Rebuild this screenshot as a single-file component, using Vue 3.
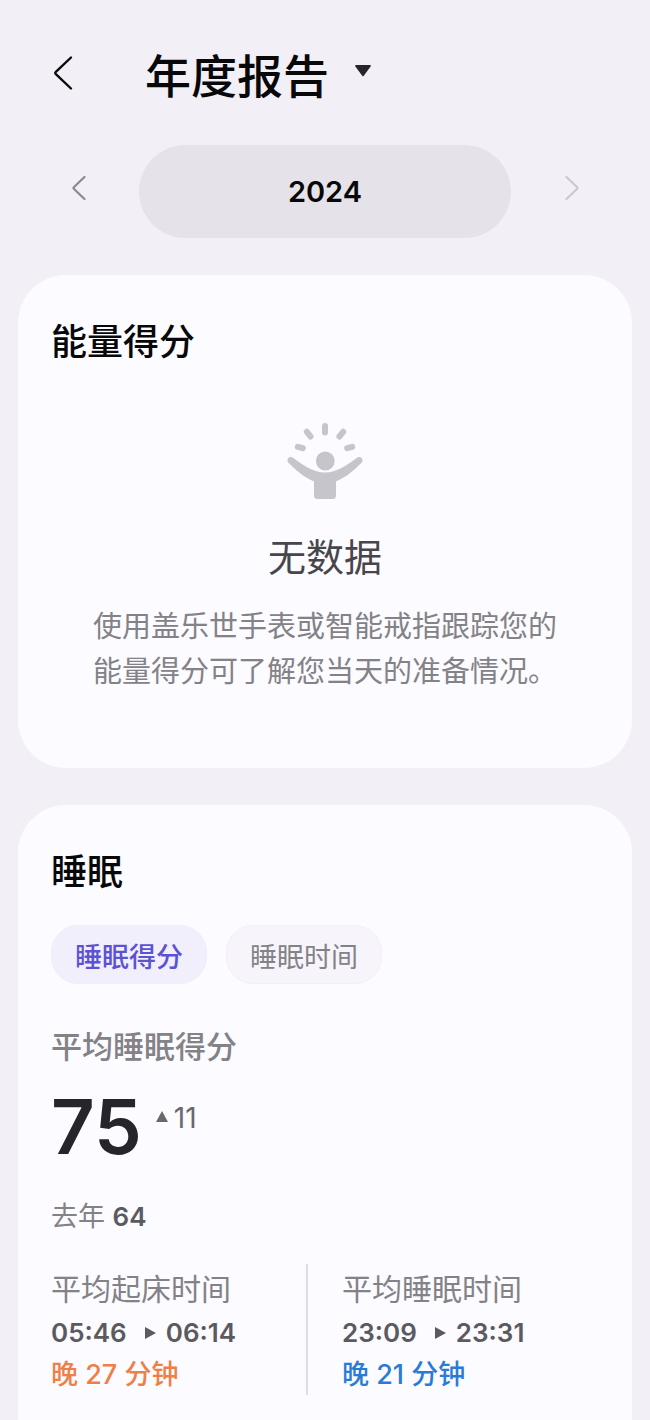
<script setup>
import { ref } from 'vue'

const year = ref(2024)
const activeTab = ref('score')
const tabs = [
  { id: 'score', label: '睡眠得分' },
  { id: 'time', label: '睡眠时间' },
]
const stats = [
  { label: '平均起床时间', from: '05:46', to: '06:14', delta: '晚 27 分钟', tone: 'orange' },
  { label: '平均睡眠时间', from: '23:09', to: '23:31', delta: '晚 21 分钟', tone: 'blue' },
]
</script>

<template>
  <main class="page">
    <header class="header">
      <button class="icon-btn back" type="button" aria-label="返回">
        <svg width="22" height="36" viewBox="0 0 22 36" fill="none" stroke="#0b0b0d" stroke-width="2.4" stroke-linecap="round" stroke-linejoin="round">
          <path d="M19 2.500 3.600 17.200q-.8.800 0 1.600L19 33.500" />
        </svg>
      </button>
      <button class="title-btn" type="button" aria-haspopup="listbox">
        <h1 class="title">年度报告</h1>
        <svg class="caret" width="16" height="16" viewBox="0 0 16 16" fill="#26252c">
          <path d="M1.200 0h13.600q1.600 0 .8 1.400L9 10.600q-1 1.200-2 0L.4 1.400Q-.4 0 1.200 0z" />
        </svg>
      </button>
    </header>

    <nav class="year-nav" aria-label="年份">
      <button class="icon-btn step" type="button" aria-label="上一年" @click="year--">
        <svg width="16" height="26" viewBox="0 0 16 26" fill="none" stroke="#8b8a8f" stroke-width="2.200" stroke-linecap="round" stroke-linejoin="round">
          <path d="M13.500 2 2.800 12.300q-.7.700 0 1.400L13.500 24" />
        </svg>
      </button>
      <button class="year" type="button">{{ year }}</button>
      <button class="icon-btn step" type="button" aria-label="下一年" disabled>
        <svg width="16" height="26" viewBox="0 0 16 26" fill="none" stroke="#cbc9d0" stroke-width="2.200" stroke-linecap="round" stroke-linejoin="round">
          <path d="M2.500 2l10.700 10.300q.7.700 0 1.400L2.500 24" />
        </svg>
      </button>
    </nav>

    <section class="card energy">
      <h2 class="card-title">能量得分</h2>
      <div class="empty">
        <svg width="80" height="80" viewBox="0 0 80 80" fill="#c7c5cc">
          <circle cx="40.300" cy="40" r="9.400" />
          <path d="M3.200 37.200c1.300-1.600 3.600-1.500 5.200-.3C18 44 28.500 51.500 40 51.500S62 44 71.600 36.900c1.600-1.200 3.900-1.300 5.200.3s.9 3.500-.5 4.900C69.500 49 61 56.500 51 60.500V74.500q0 3.500-3.500 3.500h-15q-3.500 0-3.500-3.500V60.500C19 56.500 10.500 49 3.700 42.100c-1.400-1.400-1.800-3.300-.5-4.900z" />
          <g fill="none" stroke="#c7c5cc" stroke-width="6" stroke-linecap="round">
            <path d="M40 5v6.500M21.800 10.800l3.800 4.700M58.200 10.800l-3.800 4.700M12.800 25.800l5 1.400M67.200 25.800l-5 1.400" />
          </g>
        </svg>
        <p class="empty-title">无数据</p>
        <p class="empty-text">使用盖乐世手表或智能戒指跟踪您的能量得分可了解您当天的准备情况。</p>
      </div>
    </section>

    <section class="card sleep">
      <h2 class="card-title">睡眠</h2>
      <div class="chips">
        <button
          v-for="tab in tabs"
          :key="tab.id"
          type="button"
          class="chip"
          :class="{ active: tab.id === activeTab }"
          :aria-pressed="tab.id === activeTab"
          @click="activeTab = tab.id"
        >{{ tab.label }}</button>
      </div>
      <h3 class="metric-title">平均睡眠得分</h3>
      <div class="score-row">
        <strong class="score">75</strong>
        <span class="change">
          <svg width="12" height="14" viewBox="0 0 12 14" fill="#69686d"><path d="M6 0l6 11H0z" /></svg>
          11
        </span>
      </div>
      <p class="last-year">去年 <b>64</b></p>
      <div class="stats">
        <div v-for="s in stats" :key="s.label" class="stat">
          <p class="stat-label">{{ s.label }}</p>
          <p class="stat-times">
            <span>{{ s.from }}</span>
            <svg width="11" height="12" viewBox="0 0 11 12" fill="#5b5a5f"><path d="M0 0l11 6-11 6z" /></svg>
            <span>{{ s.to }}</span>
          </p>
          <p class="stat-delta" :class="s.tone">{{ s.delta }}</p>
        </div>
      </div>
    </section>
  </main>
</template>

<style>
body {
  background: #f2f0f6;
}
</style>

<style scoped>
.page {
  box-sizing: border-box;
  min-height: 100vh;
  display: flex;
  flex-direction: column;
  background: #f2f0f6;
  color: #08080a;
  font-family: Inter, "Noto Sans CJK SC", sans-serif;
}
h1, h2, h3, p {
  margin: 0;
}
button {
  margin: 0;
  padding: 0;
  border: 0;
  background: none;
  color: inherit;
  font: inherit;
}
svg {
  display: block;
  flex: none;
}
.header {
  display: flex;
  align-items: center;
  height: 145px;
  padding-left: 52px;
}
.icon-btn {
  display: flex;
  align-items: center;
  justify-content: center;
}
.title-btn {
  display: flex;
  align-items: center;
  gap: 26px;
  margin-left: 71px;
}
.title {
  padding-top: 6px;
  font-size: 46px;
  line-height: 60px;
  font-weight: 500;
}
.year-nav {
  display: grid;
  grid-template-columns: 139px 1fr 139px;
  padding-bottom: 37px;
}
.step {
  height: 86px;
}
.step:first-child {
  padding-left: 18px;
}
.step:last-child {
  padding-right: 18px;
}
.year {
  height: 93px;
  border-radius: 47px;
  background: #e5e3e9;
  font-size: 29px;
  font-weight: 600;
}
.card {
  margin: 0 18px;
  padding: 45px 33px 0;
  border-radius: 48px;
  background: #fcfbff;
}
.card-title {
  font-size: 36px;
  line-height: 44px;
  font-weight: 500;
}
.energy {
  padding-bottom: 74px;
  margin-bottom: 37px;
}
.empty {
  display: flex;
  flex-direction: column;
  align-items: center;
  padding-top: 57px;
}
.empty-title {
  margin-top: 31px;
  font-size: 38px;
  line-height: 50px;
  color: #47464b;
}
.empty-text {
  max-width: 16em;
  margin-top: 22px;
  font-size: 29px;
  line-height: 45px;
  color: #838287;
}
.sleep {
  flex: 1;
  padding-bottom: 24px;
  border-radius: 48px 48px 0 0;
}
.chips {
  display: flex;
  gap: 19px;
  margin-top: 31px;
}
.chip {
  height: 59px;
  padding: 2px 23px 0;
  border: 1px solid #f2f0f7;
  border-radius: 27px;
  background: #f7f5fb;
  color: #838287;
  font-size: 27px;
}
.chip.active {
  border-color: #f0eefb;
  background: #f2effc;
  color: #5b53d3;
  font-weight: 500;
}
.metric-title {
  margin-top: 43px;
  font-size: 31px;
  line-height: 40px;
  font-weight: 500;
  color: #838287;
}
.score-row {
  display: flex;
  align-items: flex-start;
  gap: 14px;
  margin-top: 19px;
}
.score {
  font-size: 76px;
  line-height: 80px;
  font-weight: 600;
  color: #26252c;
}
.change {
  display: flex;
  align-items: center;
  gap: 6px;
  padding-top: 14px;
  font-size: 28px;
  line-height: 36px;
  color: #69686d;
}
.last-year {
  margin-top: 33px;
  font-size: 27px;
  line-height: 36px;
  color: #838287;
}
.last-year b {
  font-size: 26px;
  font-weight: 600;
  color: #5b5a5f;
}
.stats {
  display: grid;
  grid-template-columns: 1fr 1fr;
  gap: 34px;
  margin-top: 29px;
}
.stat:first-child {
  border-right: 2px solid #dddce2;
}
.stat-label {
  padding-top: 4px;
  font-size: 30px;
  line-height: 42px;
  color: #838287;
}
.stat-times {
  display: flex;
  align-items: center;
  padding: 2px 0 1px;
  font-size: 26px;
  line-height: 42px;
  font-weight: 600;
  color: #5b5a5f;
}
.stat-times svg {
  margin: 0 10px 0 18px;
}
.stat-delta {
  font-size: 27px;
  line-height: 40px;
  font-weight: 500;
}
.orange {
  color: #ee8047;
}
.blue {
  color: #2a7bd6;
}
</style>
